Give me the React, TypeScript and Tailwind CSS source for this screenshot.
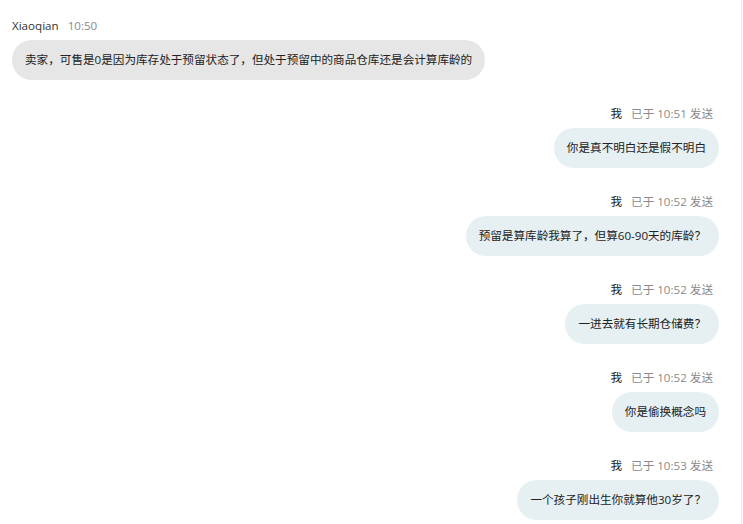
import React from "react";

type Message = {
  mine: boolean;
  name: string;
  time: string;
  text: string;
};

const messages: Message[] = [
  {
    mine: false,
    name: "Xiaoqian",
    time: "10:50",
    text: "卖家，可售是0是因为库存处于预留状态了，但处于预留中的商品仓库还是会计算库龄的",
  },
  { mine: true, name: "我", time: "10:51", text: "你是真不明白还是假不明白" },
  { mine: true, name: "我", time: "10:52", text: "预留是算库龄我算了，但算60-90天的库龄？" },
  { mine: true, name: "我", time: "10:52", text: "一进去就有长期仓储费？" },
  { mine: true, name: "我", time: "10:52", text: "你是偷换概念吗" },
  { mine: true, name: "我", time: "10:53", text: "一个孩子刚出生你就算他30岁了？" },
];

const font = {
  fontFamily: '"Open Sans", "Noto Sans CJK SC", sans-serif',
};

const App: React.FC = () => {
  return (
    <div
      className="w-[742px] h-[524px] overflow-hidden bg-white border-r border-[#ececec]"
      style={font}
    >
      <div className="flex flex-col gap-[26px] pt-[18px] pl-3 pr-[22px]">
        {messages.map((m, i) => (
          <div
            key={i}
            className={`flex flex-col gap-[6px] ${m.mine ? "items-end" : "items-start"}`}
          >
            {m.mine ? (
              <div className="flex items-center gap-[9px] h-4 pr-[6px] text-[11.6px] leading-4">
                <span className="text-[#222]">{m.name}</span>
                <span className="text-[#8a8a8a]">已于 {m.time} 发送</span>
              </div>
            ) : (
              <div className="flex items-center gap-[9px] h-4 text-[11.6px] leading-4">
                <span className="text-[#333]">{m.name}</span>
                <span className="text-[#8a8a8a]">{m.time}</span>
              </div>
            )}
            <div
              className={`h-10 flex items-center px-[13px] rounded-full text-[11.6px] text-[#222] whitespace-nowrap ${
                m.mine ? "bg-[#e6eff2]" : "bg-[#e6e6e6]"
              }`}
            >
              {m.text}
            </div>
          </div>
        ))}
      </div>
    </div>
  );
};

export default App;
